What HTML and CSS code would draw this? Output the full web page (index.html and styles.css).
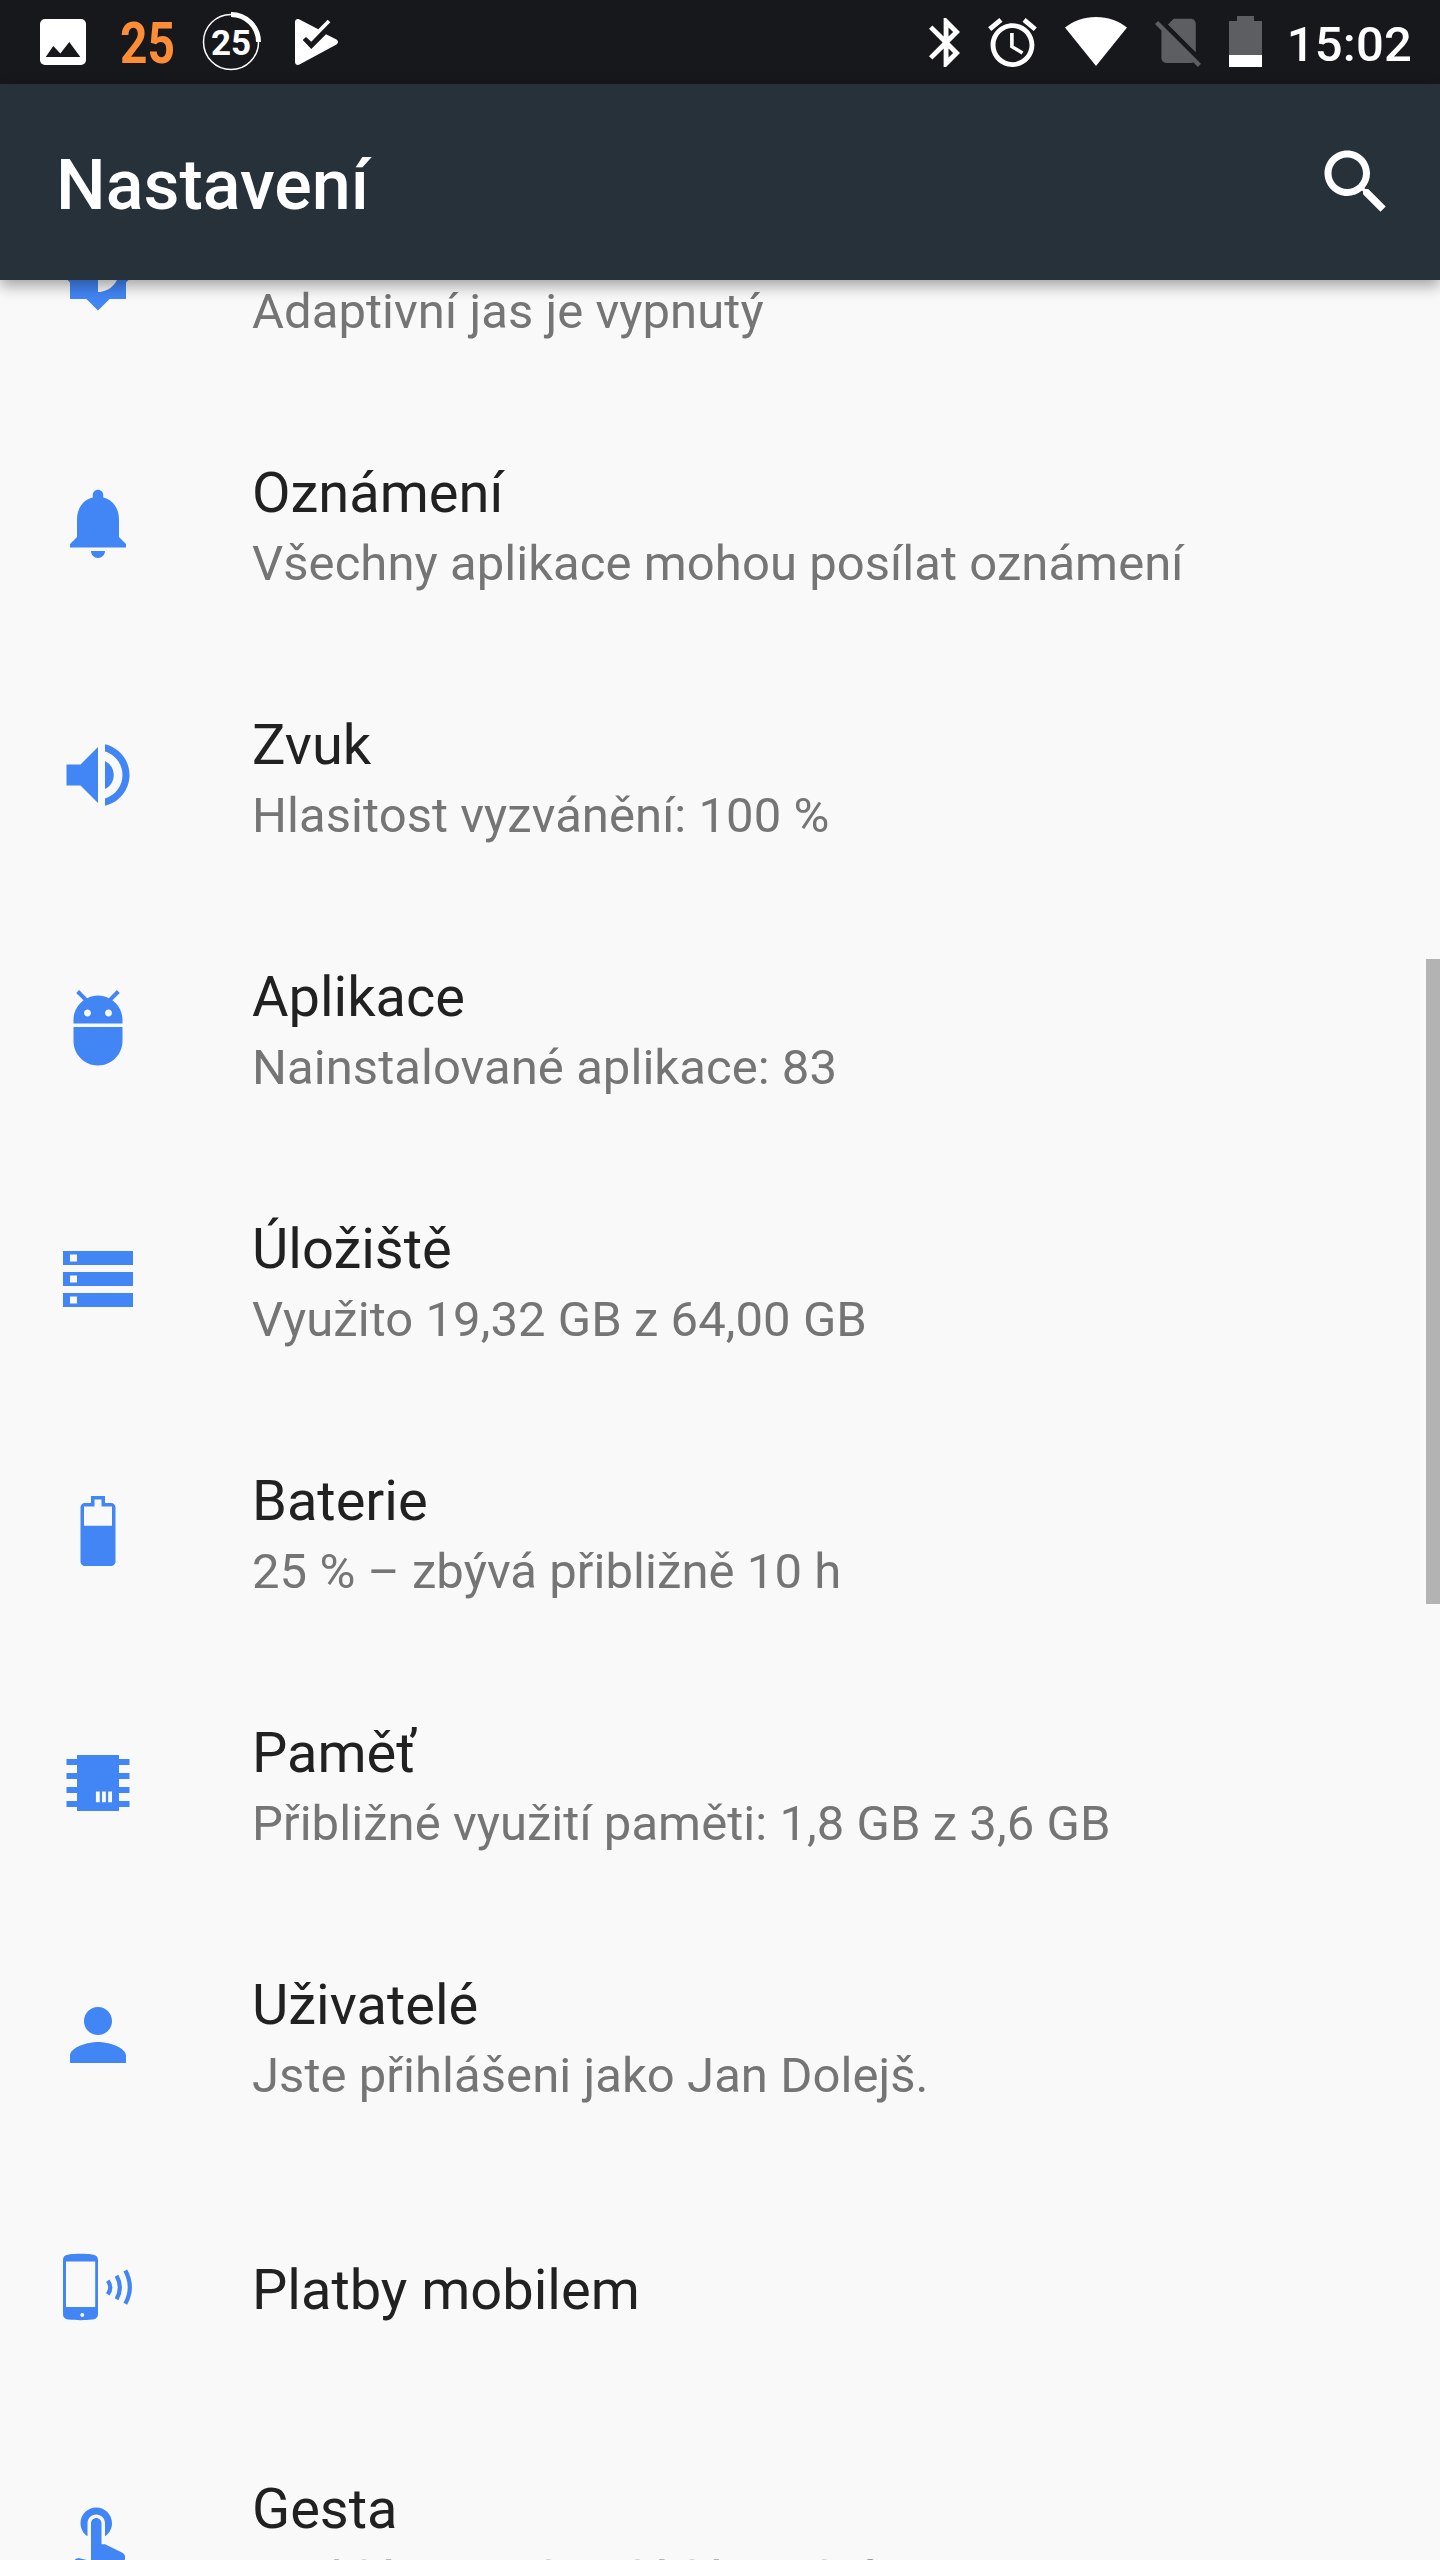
FILE: index.html
```
<!DOCTYPE html>
<html lang="cs">
  <head>
    <meta charset="utf-8" />
    <title>Nastavení</title>
    <link rel="stylesheet" href="styles.css" />
  </head>
  <body>
    <div class="screen">
      <div class="status-bar">
        <div class="notifications">
          <svg class="notification" viewBox="0 0 84 84">
            <rect x="19" y="19" width="46" height="46" rx="5" />
            <path class="cutout" d="M24.7 57l7.6-11 7 7.500 9-11.500 11 15z" />
          </svg>
          <svg class="notification" viewBox="0 0 84 84">
            <text class="battery-number" x="15" y="63" textLength="55" lengthAdjust="spacingAndGlyphs">25</text>
          </svg>
          <svg class="notification" viewBox="0 0 84 84">
            <circle class="ring" cx="42" cy="42" r="27.5" />
            <path class="ring-progress" d="M42 14.500A27.500 27.500 0 0 1 69.500 42" />
            <text class="ring-number" x="42" y="55" text-anchor="middle">25</text>
          </svg>
          <svg class="notification" viewBox="0 0 84 84">
            <path d="M22 22c0-2.500 2.500-3.600 4.500-2.500L45.300 29.300l9.400-9.600 2.600 2.600L38.300 41.700 33 37l-3.300 3 8.600 9L53 34.300l10.500 5.200c2 1.500 2 3.500 0 5L26.500 64.500c-2 1-4.500 0-4.500-2.500z" />
          </svg>
        </div>
        <div class="indicators">
          <svg width="31" height="49" viewBox="5 2 12.710 20">
            <path d="M17.710 7.710L12 2h-1v7.590L6.410 5 5 6.410 10.590 12 5 17.590 6.410 19 11 14.410V22h1l5.710-5.710-4.300-4.290 4.300-4.290zM13 5.830l1.880 1.880L13 9.590V5.830zm1.880 10.460L13 18.170v-3.760l1.880 1.880z" />
          </svg>
          <svg width="49" height="49" viewBox="2 1.860 20 20.140">
            <path d="M22 5.720l-4.600-3.860-1.290 1.530 4.600 3.860L22 5.720zM7.880 3.390L6.600 1.860 2 5.710l1.290 1.530 4.590-3.850zM12.500 8H11v6l4.750 2.850.75-1.230-4-2.370V8zM12 4c-4.970 0-9 4.030-9 9s4.020 9 9 9c4.970 0 9-4.030 9-9s-4.030-9-9-9zm0 16c-3.870 0-7-3.130-7-7s3.130-7 7-7 7 3.130 7 7-3.130 7-7 7z" />
          </svg>
          <svg width="62" height="51" viewBox="0 0 62 51">
            <path d="M31 49L0 10.500C8.500 4 19 0 31 0s22.500 4 31 10.500z" />
          </svg>
          <svg width="46" height="49" viewBox="2.380 2.700 18.740 19.920">
            <path class="dim" d="M18.990 5c0-1.100-.89-2-1.990-2h-7L7.660 5.340 19 16.680 18.990 5zM3.650 3.880L2.380 5.150 5 7.770V19c0 1.100.9 2 2 2h10.010c.35 0 .67-.1.960-.26l1.880 1.880 1.270-1.270L3.650 3.880z" />
          </svg>
          <svg width="33" height="53" viewBox="0 0 33 53">
            <path class="dim" d="M0 5h8V0h17v5h8v34H0z" />
            <path d="M0 39h33v12H0z" />
          </svg>
          <span class="clock">15:02</span>
        </div>
      </div>

      <header class="app-bar">
        <h1>Nastavení</h1>
        <svg class="search" viewBox="0 0 24 24">
          <path d="M15.500 14h-.79l-.28-.27C15.410 12.590 16 11.110 16 9.500 16 5.910 13.090 3 9.500 3S3 5.910 3 9.500 5.910 16 9.500 16c1.610 0 3.090-.59 4.230-1.570l.27.28v.79l5 4.990L20.490 19l-4.990-5zm-6 0C7.010 14 5 11.990 5 9.500S7.010 5 9.500 5 14 7.010 14 9.500 11.990 14 9.500 14z" />
        </svg>
      </header>

      <main class="list">
        <div class="item item-partial">
          <svg class="icon" viewBox="0 0 24 24">
            <path d="M20 15.310L23.310 12 20 8.690V4h-4.690L12 .69 8.690 4H4v4.690L.69 12 4 15.310V20h4.690L12 23.310 15.310 20H20v-4.690zM12 18V6c3.310 0 6 2.690 6 6s-2.690 6-6 6z" />
          </svg>
          <div class="text">
            <div class="summary">Adaptivní jas je vypnutý</div>
          </div>
        </div>

        <div class="item">
          <svg class="icon" viewBox="0 0 24 24">
            <path d="M12 22c1.100 0 2-.9 2-2h-4c0 1.100.89 2 2 2zm6-6v-5c0-3.070-1.640-5.640-4.500-6.320V4c0-.83-.67-1.500-1.500-1.500s-1.500.67-1.500 1.500v.68C7.630 5.360 6 7.920 6 11v5l-2 2v1h16v-1l-2-2z" />
          </svg>
          <div class="text">
            <div class="title">Oznámení</div>
            <div class="summary">Všechny aplikace mohou posílat oznámení</div>
          </div>
        </div>

        <div class="item">
          <svg class="icon" viewBox="0 0 24 24">
            <path d="M3 9v6h4l5 5V4L7 9H3zm13.500 3c0-1.770-1.020-3.290-2.500-4.030v8.050c1.480-.73 2.500-2.250 2.500-4.020zM14 3.230v2.060c2.890.86 5 3.540 5 6.710s-2.110 5.850-5 6.710v2.060c4.010-.91 7-4.490 7-8.770s-2.990-7.860-7-8.770z" />
          </svg>
          <div class="text">
            <div class="title">Zvuk</div>
            <div class="summary">Hlasitost vyzvánění: 100 %</div>
          </div>
        </div>

        <div class="item">
          <svg class="icon" viewBox="0 0 24 24">
            <path d="M5 16c0 3.870 3.130 7 7 7s7-3.130 7-7v-4H5v4zM16.120 4.370l2.100-2.100-.82-.83-2.300 2.310C14.160 3.280 13.120 3 12 3s-2.160.28-3.090.75L6.600 1.440l-.82.83 2.100 2.100C6.140 5.640 5 7.680 5 10v1h14v-1c0-2.320-1.140-4.360-2.880-5.630zM9 9c-.55 0-1-.45-1-1s.45-1 1-1 1 .45 1 1-.45 1-1 1zm6 0c-.55 0-1-.45-1-1s.45-1 1-1 1 .45 1 1-.45 1-1 1z" />
          </svg>
          <div class="text">
            <div class="title">Aplikace</div>
            <div class="summary">Nainstalované aplikace: 83</div>
          </div>
        </div>

        <div class="item">
          <svg class="icon" viewBox="0 0 24 24">
            <path d="M2 20h20v-4H2v4zm2-3h2v2H4v-2zM2 4v4h20V4H2zm4 3H4V5h2v2zm-4 7h20v-4H2v4zm2-3h2v2H4v-2z" />
          </svg>
          <div class="text">
            <div class="title">Úložiště</div>
            <div class="summary">Využito 19,32 GB z 64,00 GB</div>
          </div>
        </div>

        <div class="item">
          <svg class="icon" viewBox="0 0 24 24">
            <path fill-rule="evenodd" d="M10 2h4v2h1.700c.7 0 1.300.6 1.300 1.300v15.400c0 .7-.6 1.300-1.300 1.300H8.300C7.600 22 7 21.400 7 20.700V5.300C7 4.600 7.600 4 8.300 4H10zM11 3v2H8v5.500h8V5h-3V3z" />
          </svg>
          <div class="text">
            <div class="title">Baterie</div>
            <div class="summary">25 % – zbývá přibližně 10 h</div>
          </div>
        </div>

        <div class="item">
          <svg class="icon" viewBox="0 0 24 24">
            <path fill-rule="evenodd" d="M6 4h12v16H6zM11.400 14.400v3.100h1.100v-3.100zM13.150 14.400v3.100h1.100v-3.100zM14.900 14.400v3.100H16v-3.100z" />
            <path d="M3 5.150h3v1.700H3zM3 9.150h3v1.700H3zM3 13.150h3v1.700H3zM3 17.150h3v1.700H3zM18 5.150h3v1.700h-3zM18 9.150h3v1.700h-3zM18 13.150h3v1.700h-3zM18 17.150h3v1.700h-3z" />
          </svg>
          <div class="text">
            <div class="title">Paměť</div>
            <div class="summary">Přibližné využití paměti: 1,8 GB z 3,6 GB</div>
          </div>
        </div>

        <div class="item">
          <svg class="icon" viewBox="0 0 24 24">
            <path d="M12 12c2.210 0 4-1.790 4-4s-1.790-4-4-4-4 1.790-4 4 1.790 4 4 4zm0 2c-2.670 0-8 1.340-8 4v2h16v-2c0-2.660-5.330-4-8-4z" />
          </svg>
          <div class="text">
            <div class="title">Uživatelé</div>
            <div class="summary">Jste přihlášeni jako Jan Dolejš.</div>
          </div>
        </div>

        <div class="item">
          <svg class="icon" viewBox="0 0 24 24">
            <path fill-rule="evenodd" d="M2 4.300C2 3.200 2.700 2.800 3.700 2.700c2-.25 4.600-.25 6.600 0 1 .1 1.700.5 1.700 1.600v15.400c0 1.100-.7 1.500-1.700 1.600-2 .25-4.600.25-6.600 0C2.700 21.200 2 20.800 2 19.700zM2.850 4.700v13h8.350v-13zM7.500 19.450a.55.55 0 1 0 .01 0z" />
            <path class="waves" d="M14.800 10.200q1.400 1.900 0 3.900M17.300 8.800q1.900 3.300 0 6.700M19.800 7.300q2.600 4.800 0 9.500" />
          </svg>
          <div class="text">
            <div class="title single">Platby mobilem</div>
          </div>
        </div>

        <div class="item">
          <svg class="icon" viewBox="0 0 24 24">
            <path d="M9 11.240V7.500C9 6.120 10.120 5 11.500 5S14 6.120 14 7.500v3.740c1.210-.81 2-2.180 2-3.740C16 5.010 13.990 3 11.500 3S7 5.010 7 7.500c0 1.560.79 2.930 2 3.740zm9.840 4.630l-4.540-2.260c-.17-.07-.35-.11-.54-.11H13v-6c0-.83-.67-1.500-1.500-1.500S10 6.670 10 7.500v10.740l-3.430-.72c-.08-.01-.15-.03-.24-.03-.31 0-.59.13-.79.33l-.79.8 4.940 4.940c.27.27.65.44 1.060.44h6.790c.75 0 1.330-.55 1.440-1.280l.75-5.270c.01-.07.02-.14.02-.2 0-.62-.38-1.160-.91-1.380z" />
          </svg>
          <div class="text">
            <div class="title">Gesta</div>
            <div class="summary">Rychlá gesta k ovládání telefonu</div>
          </div>
        </div>
      </main>

      <div class="scrollbar"></div>
    </div>
  </body>
</html>
```

FILE: styles.css
```
body {
  margin: 0;
  font-family: Roboto, sans-serif;
  background-color: #f9f9f9;
}

.screen {
  position: relative;
  display: flex;
  flex-direction: column;
  width: 1440px;
  height: 2560px;
  overflow: hidden;
}

.status-bar {
  display: flex;
  flex: none;
  justify-content: space-between;
  height: 84px;
  padding: 0 28px 0 21px;
  background-color: #17181c;
  box-sizing: border-box;
}

.status-bar svg {
  flex: none;
  fill: #fff;
}

.notifications {
  display: flex;
}

.notification {
  width: 84px;
  height: 84px;
}

.notification .cutout {
  fill: #17181c;
}

.notification .battery-number {
  font-size: 57px;
  font-weight: 700;
  fill: #ff8d36;
}

.notification .ring {
  fill: none;
  stroke: #fff;
  stroke-width: 1.5;
}

.notification .ring-progress {
  fill: none;
  stroke: #fff;
  stroke-width: 5;
}

.ring-number {
  font-size: 35px;
  font-weight: 700;
}

.indicators {
  display: flex;
  align-items: center;
  gap: 28px;
  padding-top: 1px;
}

.indicators .dim {
  fill: #5d5e61;
}

.clock {
  margin-left: -3px;
  padding-top: 3px;
  color: #fff;
  font-size: 49px;
  font-weight: 500;
  line-height: 57px;
  letter-spacing: 0.2px;
}

.app-bar {
  position: relative;
  z-index: 1;
  display: flex;
  flex: none;
  align-items: center;
  justify-content: space-between;
  height: 196px;
  padding: 0 42px 0 56px;
  background-color: #27313a;
  box-shadow: 0 6px 14px rgba(0, 0, 0, 0.35);
  box-sizing: border-box;
}

.app-bar h1 {
  margin: 0;
  padding-top: 5px;
  color: #fff;
  font-size: 70px;
  font-weight: 500;
  line-height: 82px;
}

.search {
  width: 84px;
  height: 84px;
  fill: #fff;
}

/* list is scrolled, the first row sits partly under the app bar */
.list {
  flex: none;
  margin-top: -135px;
}

.item {
  display: flex;
  align-items: center;
  height: 252px;
  padding-left: 56px;
  box-sizing: border-box;
}

.item-partial .text {
  padding-top: 80px;
}

.icon {
  flex: none;
  width: 84px;
  height: 84px;
  margin-right: 112px;
  fill: #4285f4;
}

.icon .waves {
  fill: none;
  stroke: #4285f4;
  stroke-width: 1.2;
}

.text {
  white-space: nowrap;
}

.title {
  padding: 3px 0 2px;
  color: #212121;
  font-size: 56px;
  line-height: 75px;
}

.title.single {
  padding: 6px 0 0;
}

.summary {
  color: #757575;
  font-size: 49px;
  line-height: 61px;
  letter-spacing: 0.06px;
}

.scrollbar {
  position: absolute;
  top: 959px;
  right: 0;
  z-index: 2;
  width: 14px;
  height: 645px;
  background-color: #b3b3b3;
}
```
